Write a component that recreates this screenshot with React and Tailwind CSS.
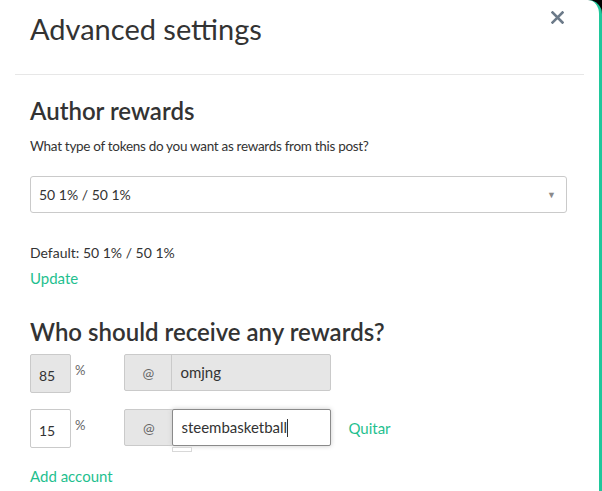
import React from 'react'

const green = 'text-[#1fbf8f]'

export default function App() {
  return (
    <div className="w-[602px] h-[491px] bg-black overflow-hidden" style={{ fontFamily: 'Lato, "Liberation Sans", sans-serif' }}>
      <div className="relative h-full bg-white border-r-[3px] border-[#1fc79b] rounded-tr-[14px] text-[#333]">
        <button className="absolute left-[551px] top-[11px] text-[#6c7a89]" aria-label="Close">
          <svg width="13" height="13" viewBox="0 0 13 13">
            <path d="M1.5 1.5 L11.5 11.5 M11.5 1.5 L1.5 11.5" stroke="currentColor" strokeWidth="2.6" strokeLinecap="square" />
          </svg>
        </button>
        <div className="px-[30px] pt-[11px] pb-[27px]">
          <h1 className="text-[29px] font-normal leading-[36px]">Advanced settings</h1>
        </div>
        <div className="mx-[15px] border-t border-[#e7e7e7]" />
        <div className="px-[30px] pt-[20px]">
          <h2 className="text-[24px] font-semibold leading-[32px]">Author rewards</h2>
          <p className="mt-[9px] text-[13.5px] tracking-[-0.3px] leading-[20px]">What type of tokens do you want as rewards from this post?</p>
          <div className="mt-[20px] w-[537px] h-[37px] border border-[#cacaca] rounded-[3px] flex items-center justify-between pl-[8px] pr-[10px] text-[14px]">
            <span>50 1% / 50 1%</span>
            <span className="text-[#8a8a8a] text-[9px]">▼</span>
          </div>
          <p className="mt-[30px] text-[14px] leading-[20px]">Default: 50 1% / 50 1%</p>
          <p className={`mt-[5px] text-[15px] leading-[20px] ${green}`}>Update</p>
          <h2 className="mt-[28px] text-[24px] font-semibold leading-[32px]">Who should receive any rewards?</h2>
          <div className="mt-[6px] flex items-start">
            <div className="w-[41px] h-[39px] bg-[#e6e6e6] border border-[#cacaca] rounded-[2px] flex items-center pl-[8px] pt-[4px] text-[14px]">85</div>
            <span className="ml-[4px] mt-[7px] text-[13px] text-[#666]">%</span>
            <div className="ml-[39px] flex h-[37px] w-[207px] border border-[#cacaca] rounded-[2px] bg-[#e6e6e6]">
              <div className="w-[47px] flex items-center justify-center text-[14px] text-[#666] border-r border-[#cacaca]">@</div>
              <div className="flex-1 flex items-center pl-[8px] text-[15px]">omjng</div>
            </div>
          </div>
          <div className="mt-[16px] flex items-start">
            <div className="w-[41px] h-[39px] bg-white border border-[#cacaca] rounded-[2px] flex items-center pl-[8px] pt-[4px] text-[14px]">15</div>
            <span className="ml-[4px] mt-[7px] text-[13px] text-[#666]">%</span>
            <div className="ml-[39px] relative flex h-[37px] w-[207px] border border-[#cacaca] rounded-[2px] bg-[#e6e6e6]">
              <div className="w-[47px] flex items-center justify-center text-[14px] text-[#666]">@</div>
              <div className="relative flex-1 -my-px -mr-px flex items-center pl-[8px] text-[15px] bg-white border border-[#8a8a8a] rounded-[2px] shadow-[0_0_5px_#cacaca]">
                steembasketball<span className="inline-block w-px h-[18px] bg-[#333]" />
                <div className="absolute left-[-1px] top-[37px] w-[20px] h-[5px] border border-[#d8d8d8] bg-white" />
              </div>
            </div>
            <span className={`ml-[17px] mt-[8px] text-[15px] ${green}`}>Quitar</span>
          </div>
          <p className={`mt-[18px] text-[15px] leading-[20px] ${green}`}>Add account</p>
        </div>
      </div>
    </div>
  )
}
